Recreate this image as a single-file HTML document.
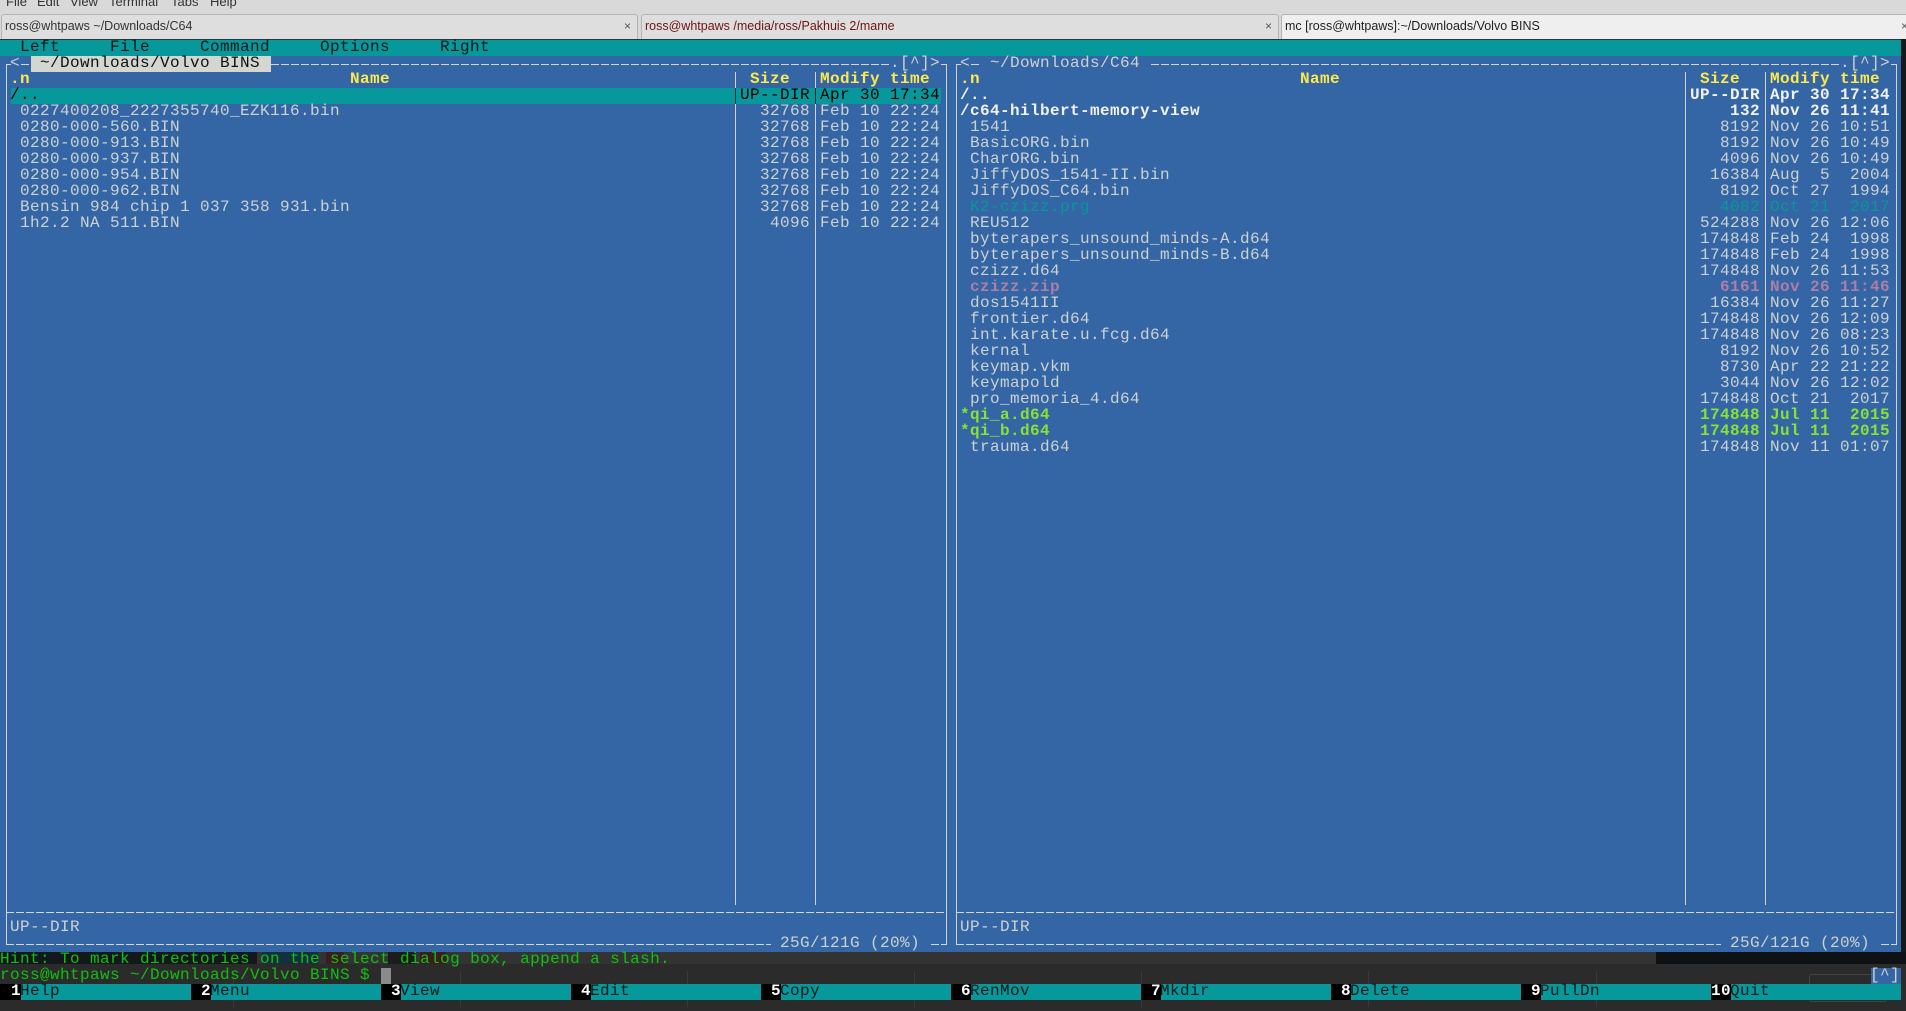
<!DOCTYPE html>
<html lang="en">
<head>
<meta charset="utf-8">
<title>mc [ross@whtpaws]:~/Downloads/Volvo BINS</title>
<style>
html,body{margin:0;padding:0;background:#2d2d2d}
body{position:relative;width:1906px;height:1011px;overflow:hidden;font-family:"Liberation Mono",monospace;font-size:16px;line-height:16px;letter-spacing:.4px;color:#cdd2d2}
.a{position:absolute}
.t{position:absolute;white-space:pre;transform:translate(-1px,-1px)}
.gmenu{position:absolute;top:-5px;font:13px/14px "Liberation Sans",sans-serif;letter-spacing:0;color:#333}
.tab{position:absolute;top:14px;background:#dedede;border:1px solid #b4b4b4;border-bottom:0;border-radius:3px 3px 0 0;font:12.5px/22px "Liberation Sans",sans-serif;letter-spacing:0;color:#333;padding-left:3px;box-sizing:border-box;height:25px;white-space:pre}
.tab b{position:absolute;right:6px;top:0;font-weight:normal;color:#555;font-size:12px}
.h{position:absolute;height:1px;background:repeating-linear-gradient(90deg,#d3d7cf 0 8px,transparent 8px 10px)}
.v{position:absolute;width:1px;background:#d0d4d0}
.hd{color:#fce94f;font-weight:bold}
.panel{position:absolute;top:88px;width:950px}
.row{position:relative;height:16px}
.row span{position:absolute;top:0;white-space:pre;transform:translate(-1px,-1px)}
.n{left:20px}.u{left:10px}
.s{left:740px;width:70px;text-align:right}
.d{left:820px}
.dir{color:#f2f2f0;font-weight:bold}
.sel{color:#000}
.ex{color:#06989a}
.zip{color:#ad7fa8;font-weight:bold}
.gr{color:#8ae234;font-weight:bold}
.fk{position:absolute;top:984px;height:16px;background:#06989a;color:#10181a;white-space:pre}
.fk i{position:absolute;left:0;top:0;width:20px;height:16px;line-height:14px;background:#000;color:#fff;font-style:normal;font-weight:bold;text-align:right}
.fk u{position:absolute;left:20px;top:0;text-decoration:none;transform:translate(-1px,-1px)}
</style>
</head>
<body>
<!-- window chrome -->
<div class="a" style="left:0;top:0;width:1906px;height:39px;background:#d9d9d9"></div>
<span class="gmenu" style="left:6px">File</span>
<span class="gmenu" style="left:37px">Edit</span>
<span class="gmenu" style="left:70px">View</span>
<span class="gmenu" style="left:109px">Terminal</span>
<span class="gmenu" style="left:171px">Tabs</span>
<span class="gmenu" style="left:210px">Help</span>
<div class="tab" style="left:1px;width:637px">ross@whtpaws ~/Downloads/C64<b>×</b></div>
<div class="tab" style="left:641px;width:638px;color:#6e1414">ross@whtpaws /media/ross/Pakhuis 2/mame<b>×</b></div>
<div class="tab" style="left:1281px;width:640px;background:#efefef;color:#222">mc [ross@whtpaws]:~/Downloads/Volvo BINS<b style="right:12px">×</b></div>

<!-- terminal base -->
<div class="a" style="left:0;top:39px;width:1906px;height:972px;background:#2c2c2c"></div>
<div class="a" style="left:1901px;top:39px;width:5px;height:925px;background:#15181a"></div>
<div class="a" style="left:0;top:39px;width:1901px;height:1px;background:#23393c"></div>

<!-- menu bar -->
<div class="a" style="left:0;top:40px;width:1901px;height:16px;background:#06989a"></div>
<span class="t" style="left:21px;top:40px;color:#10181a">Left</span>
<span class="t" style="left:111px;top:40px;color:#10181a">File</span>
<span class="t" style="left:201px;top:40px;color:#10181a">Command</span>
<span class="t" style="left:321px;top:40px;color:#10181a">Options</span>
<span class="t" style="left:441px;top:40px;color:#10181a">Right</span>

<!-- panels background -->
<div class="a" style="left:0;top:56px;width:1901px;height:896px;background:#3465a4"></div>

<!-- borders: left panel -->
<div class="v" style="left:6px;top:64px;height:881px"></div>
<div class="v" style="left:946px;top:64px;height:881px"></div>
<div class="h" style="left:6px;top:64px;width:5px"></div>
<div class="h" style="left:21px;top:64px;width:10px"></div>
<div class="h" style="left:271px;top:64px;width:620px"></div>
<div class="h" style="left:941px;top:64px;width:6px"></div>
<div class="h" style="left:6px;top:912px;width:940px"></div>
<div class="h" style="left:6px;top:944px;width:765px"></div>
<div class="h" style="left:931px;top:944px;width:16px"></div>
<div class="v" style="left:735px;top:72px;height:833px"></div>
<div class="v" style="left:815px;top:72px;height:833px"></div>

<!-- borders: right panel -->
<div class="v" style="left:956px;top:64px;height:881px"></div>
<div class="v" style="left:1896px;top:64px;height:881px"></div>
<div class="h" style="left:956px;top:64px;width:5px"></div>
<div class="h" style="left:971px;top:64px;width:9px"></div>
<div class="h" style="left:1151px;top:64px;width:690px"></div>
<div class="h" style="left:1891px;top:64px;width:6px"></div>
<div class="h" style="left:956px;top:912px;width:940px"></div>
<div class="h" style="left:956px;top:944px;width:765px"></div>
<div class="h" style="left:1881px;top:944px;width:16px"></div>
<div class="v" style="left:1685px;top:72px;height:833px"></div>
<div class="v" style="left:1765px;top:72px;height:833px"></div>

<!-- titles -->
<span class="t" style="left:11px;top:56px">&lt;</span>
<div class="a" style="left:31px;top:56px;width:240px;height:16px;background:#d3d7cf"></div>
<span class="t" style="left:31px;top:56px;color:#111"> ~/Downloads/Volvo BINS </span>
<span class="t" style="left:891px;top:56px">.[^]&gt;</span>
<span class="t" style="left:961px;top:56px">&lt;</span>
<span class="t" style="left:991px;top:56px">~/Downloads/C64</span>
<span class="t" style="left:1841px;top:56px">.[^]&gt;</span>

<!-- headers -->
<span class="t hd" style="left:11px;top:72px">.n</span>
<span class="t hd" style="left:351px;top:72px">Name</span>
<span class="t hd" style="left:751px;top:72px">Size</span>
<span class="t hd" style="left:821px;top:72px">Modify time</span>
<span class="t hd" style="left:961px;top:72px">.n</span>
<span class="t hd" style="left:1301px;top:72px">Name</span>
<span class="t hd" style="left:1701px;top:72px">Size</span>
<span class="t hd" style="left:1771px;top:72px">Modify time</span>

<!-- highlight bar -->
<div class="a" style="left:11px;top:88px;width:930px;height:16px;background:#06989a"></div>
<div class="a" style="left:735px;top:88px;width:1px;height:16px;background:#0a2a2a"></div>
<div class="a" style="left:815px;top:88px;width:1px;height:16px;background:#0a2a2a"></div>

<!-- left panel files -->
<div class="panel" style="left:1px">
<div class="row sel"><span class="u">/..</span><span class="s">UP--DIR</span><span class="d">Apr 30 17:34</span></div>
<div class="row"><span class="n">0227400208_2227355740_EZK116.bin</span><span class="s">32768</span><span class="d">Feb 10 22:24</span></div>
<div class="row"><span class="n">0280-000-560.BIN</span><span class="s">32768</span><span class="d">Feb 10 22:24</span></div>
<div class="row"><span class="n">0280-000-913.BIN</span><span class="s">32768</span><span class="d">Feb 10 22:24</span></div>
<div class="row"><span class="n">0280-000-937.BIN</span><span class="s">32768</span><span class="d">Feb 10 22:24</span></div>
<div class="row"><span class="n">0280-000-954.BIN</span><span class="s">32768</span><span class="d">Feb 10 22:24</span></div>
<div class="row"><span class="n">0280-000-962.BIN</span><span class="s">32768</span><span class="d">Feb 10 22:24</span></div>
<div class="row"><span class="n">Bensin 984 chip 1 037 358 931.bin</span><span class="s">32768</span><span class="d">Feb 10 22:24</span></div>
<div class="row"><span class="n">1h2.2 NA 511.BIN</span><span class="s">4096</span><span class="d">Feb 10 22:24</span></div>
</div>

<!-- right panel files -->
<div class="panel" style="left:951px">
<div class="row dir"><span class="u">/..</span><span class="s">UP--DIR</span><span class="d">Apr 30 17:34</span></div>
<div class="row dir"><span class="u">/c64-hilbert-memory-view</span><span class="s">132</span><span class="d">Nov 26 11:41</span></div>
<div class="row"><span class="n">1541</span><span class="s">8192</span><span class="d">Nov 26 10:51</span></div>
<div class="row"><span class="n">BasicORG.bin</span><span class="s">8192</span><span class="d">Nov 26 10:49</span></div>
<div class="row"><span class="n">CharORG.bin</span><span class="s">4096</span><span class="d">Nov 26 10:49</span></div>
<div class="row"><span class="n">JiffyDOS_1541-II.bin</span><span class="s">16384</span><span class="d">Aug  5  2004</span></div>
<div class="row"><span class="n">JiffyDOS_C64.bin</span><span class="s">8192</span><span class="d">Oct 27  1994</span></div>
<div class="row ex"><span class="n">K2-czizz.prg</span><span class="s">4082</span><span class="d">Oct 21  2017</span></div>
<div class="row"><span class="n">REU512</span><span class="s">524288</span><span class="d">Nov 26 12:06</span></div>
<div class="row"><span class="n">byterapers_unsound_minds-A.d64</span><span class="s">174848</span><span class="d">Feb 24  1998</span></div>
<div class="row"><span class="n">byterapers_unsound_minds-B.d64</span><span class="s">174848</span><span class="d">Feb 24  1998</span></div>
<div class="row"><span class="n">czizz.d64</span><span class="s">174848</span><span class="d">Nov 26 11:53</span></div>
<div class="row zip"><span class="n">czizz.zip</span><span class="s">6161</span><span class="d">Nov 26 11:46</span></div>
<div class="row"><span class="n">dos1541II</span><span class="s">16384</span><span class="d">Nov 26 11:27</span></div>
<div class="row"><span class="n">frontier.d64</span><span class="s">174848</span><span class="d">Nov 26 12:09</span></div>
<div class="row"><span class="n">int.karate.u.fcg.d64</span><span class="s">174848</span><span class="d">Nov 26 08:23</span></div>
<div class="row"><span class="n">kernal</span><span class="s">8192</span><span class="d">Nov 26 10:52</span></div>
<div class="row"><span class="n">keymap.vkm</span><span class="s">8730</span><span class="d">Apr 22 21:22</span></div>
<div class="row"><span class="n">keymapold</span><span class="s">3044</span><span class="d">Nov 26 12:02</span></div>
<div class="row"><span class="n">pro_memoria_4.d64</span><span class="s">174848</span><span class="d">Oct 21  2017</span></div>
<div class="row gr"><span class="u">*qi_a.d64</span><span class="s">174848</span><span class="d">Jul 11  2015</span></div>
<div class="row gr"><span class="u">*qi_b.d64</span><span class="s">174848</span><span class="d">Jul 11  2015</span></div>
<div class="row"><span class="n">trauma.d64</span><span class="s">174848</span><span class="d">Nov 11 01:07</span></div>
</div>

<!-- status lines -->
<span class="t" style="left:11px;top:920px">UP--DIR</span>
<span class="t" style="left:961px;top:920px">UP--DIR</span>
<span class="t" style="left:781px;top:936px">25G/121G (20%)</span>
<span class="t" style="left:1731px;top:936px">25G/121G (20%)</span>

<!-- transparent terminal backdrop -->
<div class="a" style="left:0;top:952px;width:1656px;height:12px;background:#333"></div>
<div class="a" style="left:1656px;top:952px;width:250px;height:12px;background:#0e1215"></div>
<div class="a" style="left:0;top:952px;width:257px;height:12px;background:#12181b"></div>
<div class="a" style="left:262px;top:952px;width:56px;height:12px;background:#14303c"></div>
<div class="a" style="left:326px;top:952px;width:18px;height:12px;background:#3c1c1c"></div>
<div class="a" style="left:388px;top:952px;width:27px;height:12px;background:#1c1c1c"></div>
<div class="a" style="left:420px;top:952px;width:26px;height:12px;background:#3c1c1c"></div>
<div class="a" style="left:0;top:964px;width:1906px;height:47px;background:#2b2b2b"></div>
<div class="a" style="left:233px;top:971px;width:1px;height:36px;background:#3a3a3a"></div>
<div class="a" style="left:460px;top:971px;width:1px;height:36px;background:#3a3a3a"></div>
<div class="a" style="left:687px;top:971px;width:1px;height:36px;background:#3a3a3a"></div>
<div class="a" style="left:914px;top:971px;width:1px;height:36px;background:#3a3a3a"></div>
<div class="a" style="left:1141px;top:971px;width:1px;height:36px;background:#3a3a3a"></div>
<div class="a" style="left:1368px;top:971px;width:1px;height:36px;background:#3a3a3a"></div>
<div class="a" style="left:1596px;top:971px;width:1px;height:36px;background:#3a3a3a"></div>
<div class="a" style="left:1809px;top:974px;width:76px;height:26px;border:1px solid #444;border-radius:3px"></div>

<!-- hint and prompt -->
<span class="t" style="left:1px;top:952px;color:#10c010">Hint: To mark directories on the select dialog box, append a slash.</span>
<span class="t" style="left:1px;top:968px;color:#10c010">ross@whtpaws ~/Downloads/Volvo BINS $</span>
<div class="a" style="left:381px;top:968px;width:10px;height:16px;background:#8a8a8a"></div>
<div class="a" style="left:1871px;top:968px;width:30px;height:16px;background:#3465a4"></div>
<span class="t" style="left:1871px;top:968px">[^]</span>

<!-- function keys -->
<div class="fk" style="left:1px;width:190px"><i>1</i><u>Help</u></div>
<div class="fk" style="left:191px;width:190px"><i>2</i><u>Menu</u></div>
<div class="fk" style="left:381px;width:190px"><i>3</i><u>View</u></div>
<div class="fk" style="left:571px;width:190px"><i>4</i><u>Edit</u></div>
<div class="fk" style="left:761px;width:190px"><i>5</i><u>Copy</u></div>
<div class="fk" style="left:951px;width:190px"><i>6</i><u>RenMov</u></div>
<div class="fk" style="left:1141px;width:190px"><i>7</i><u>Mkdir</u></div>
<div class="fk" style="left:1331px;width:190px"><i>8</i><u>Delete</u></div>
<div class="fk" style="left:1521px;width:190px"><i>9</i><u>PullDn</u></div>
<div class="fk" style="left:1711px;width:190px"><i>10</i><u>Quit</u></div>
<div class="a" style="left:0;top:984px;width:1px;height:16px;background:#000"></div>
</body>
</html>
